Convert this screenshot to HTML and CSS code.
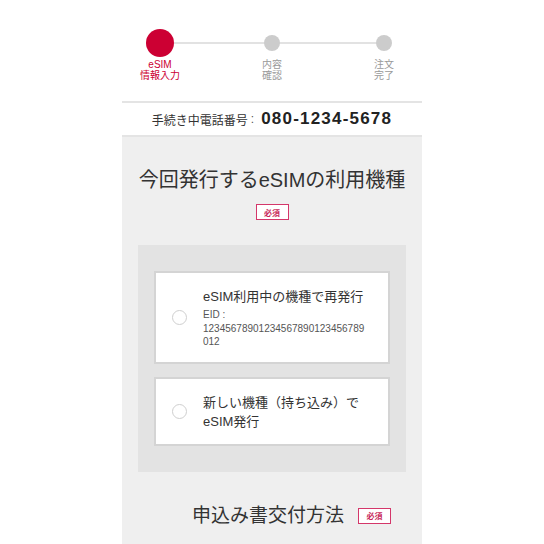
FILE: index.html
```html
<!DOCTYPE html>
<html lang="ja">
<head>
<meta charset="utf-8">
<title>eSIM情報入力</title>
<link rel="stylesheet" href="styles.css">
</head>
<body>
<div class="page">
  <div class="stepper">
    <div class="step active">
      <div class="dot-wrap"><span class="dot"></span></div>
      <div class="label">eSIM<br>情報入力</div>
    </div>
    <div class="step">
      <div class="dot-wrap"><span class="dot"></span></div>
      <div class="label">内容<br>確認</div>
    </div>
    <div class="step">
      <div class="dot-wrap"><span class="dot"></span></div>
      <div class="label">注文<br>完了</div>
    </div>
  </div>

  <div class="phone">
    <span class="phone-label">手続き中電話番号</span><span class="colon">:</span><span class="num">080-1234-5678</span>
  </div>

  <div class="main">
    <h2 class="title">今回発行するeSIMの利用機種</h2>
    <div class="badge-row"><span class="badge">必須</span></div>

    <div class="options">
      <div class="card">
        <span class="radio"></span>
        <div class="card-text">
          <div class="card-title first">eSIM利用中の機種で再発行</div>
          <div class="eid">EID :<br><span class="eid-num">12345678901234567890123456789012</span></div>
        </div>
      </div>
      <div class="card">
        <span class="radio"></span>
        <div class="card-text">
          <div class="card-title">新しい機種（持ち込み）でeSIM発行</div>
        </div>
      </div>
    </div>

    <div class="sub-head">
      <h2 class="sub-title">申込み書交付方法</h2>
      <span class="badge">必須</span>
    </div>
  </div>
</div>
</body>
</html>
```

FILE: styles.css
```css
html, body {
  margin: 0;
  padding: 0;
  background: #ffffff;
}
body {
  font-family: "Liberation Sans", "Noto Sans CJK JP", sans-serif;
  color: #333333;
}
.page {
  width: 300px;
  margin: 0 auto;
  min-height: 544px;
  display: flex;
  flex-direction: column;
  background: #efefef;
}

/* stepper */
.stepper {
  position: relative;
  background: #ffffff;
  height: 101px;
  box-sizing: border-box;
  padding: 29px 22px 0;
  display: flex;
  justify-content: space-between;
  align-items: flex-start;
}
.stepper::before {
  content: "";
  position: absolute;
  left: 38px;
  right: 38px;
  top: 42px;
  height: 2px;
  background: #e2e2e2;
}
.step {
  position: relative;
  width: 32px;
  display: flex;
  flex-direction: column;
  align-items: center;
}
.dot-wrap {
  width: 28px;
  height: 28px;
  display: flex;
  align-items: center;
  justify-content: center;
}
.dot {
  width: 16px;
  height: 16px;
  border-radius: 50%;
  background: #cccccc;
}
.step.active .dot {
  width: 28px;
  height: 28px;
  background: #cc0033;
}
.label {
  margin-top: 2px;
  font-size: 10px;
  line-height: 11px;
  text-align: center;
  white-space: nowrap;
  color: #999999;
}
.step.active .label {
  color: #cc0033;
}

/* phone bar */
.phone {
  background: #ffffff;
  border-top: 2px solid #e4e4e4;
  border-bottom: 2px solid #e4e4e4;
  height: 32px;
  display: flex;
  align-items: center;
  justify-content: center;
}
.phone-label {
  font-size: 12px;
  color: #333333;
}
.colon {
  font-size: 12px;
  color: #555555;
  margin: 0 7px 0 3px;
}
.num {
  font-size: 17px;
  font-weight: bold;
  letter-spacing: 1.2px;
  color: #222222;
}

/* main */
.main {
  flex: 1;
  background: #efefef;
  padding: 29px 16px 30px;
}
.title {
  margin: 0;
  font-size: 20px;
  line-height: 28px;
  font-weight: normal;
  text-align: center;
  color: #333333;
}
.badge-row {
  margin-top: 10px;
  display: flex;
  justify-content: center;
}
.badge {
  display: inline-flex;
  align-items: center;
  justify-content: center;
  box-sizing: border-box;
  width: 33px;
  height: 16px;
  border: 1.5px solid #d4376a;
  background: #ffffff;
  color: #c8285a;
  font-size: 8px;
  font-weight: bold;
}

.options {
  margin-top: 25px;
  background: #e3e3e3;
  padding: 26px 16px;
  display: flex;
  flex-direction: column;
  gap: 13px;
}
.card {
  background: #ffffff;
  border: 2px solid #d4d4d4;
  display: flex;
  align-items: center;
  gap: 16px;
  padding: 14px 20px 13px 16px;
}
.radio {
  flex: none;
  width: 15px;
  height: 15px;
  box-sizing: border-box;
  border: 1.5px solid #cfcfcf;
  border-radius: 50%;
  background: #ffffff;
}
.card-text {
  flex: 1;
  min-width: 0;
}
.card-title {
  font-size: 13px;
  line-height: 19px;
  color: #333333;
}
.card-title.first {
  margin-bottom: 2px;
}
.eid {
  font-size: 10px;
  line-height: 13.5px;
  color: #555555;
}
.eid-num {
  word-break: break-all;
}

.sub-head {
  margin-top: 30px;
  padding-left: 54px;
  display: flex;
  align-items: center;
  gap: 14px;
}
.sub-title {
  margin: 0;
  font-size: 19px;
  line-height: 28px;
  font-weight: normal;
  color: #333333;
}
```
